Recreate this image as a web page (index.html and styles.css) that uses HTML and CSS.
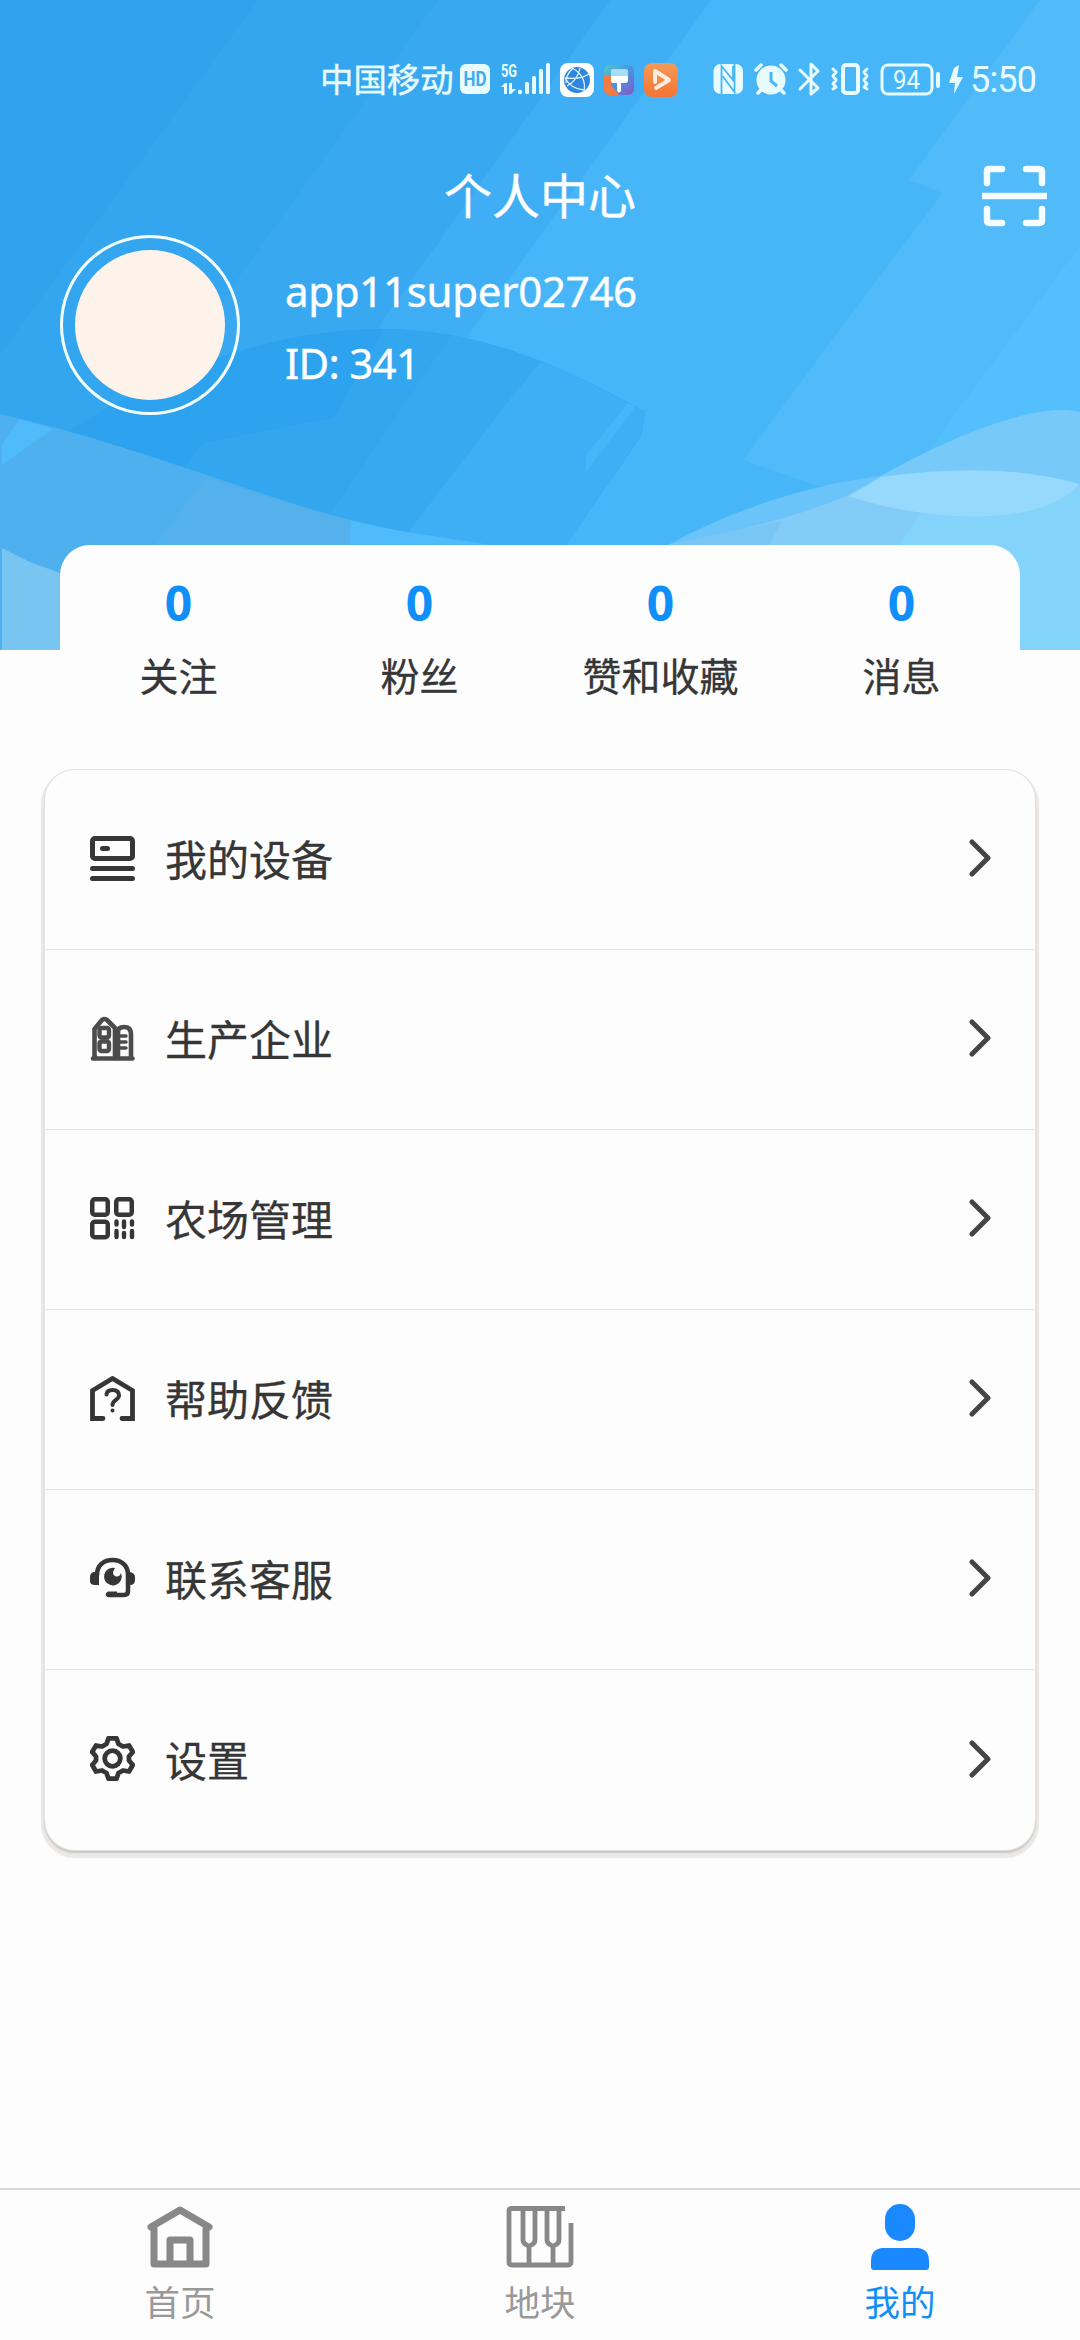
FILE: index.html
```html
<!DOCTYPE html>
<html lang="zh-CN">
<head>
<meta charset="utf-8">
<title>个人中心</title>
<link rel="stylesheet" href="styles.css">
</head>
<body>
<header class="hero">
  <svg class="hero-art" viewBox="0 0 1080 650" aria-hidden="true">
    <defs>
      <linearGradient id="brush" x1="0" y1="0" x2="1" y2="1"><stop offset="0" stop-color="#53c9c4"/><stop offset=".5" stop-color="#4a94df"/><stop offset="1" stop-color="#8a55c5"/></linearGradient>
      <linearGradient id="play" x1="0" y1="0" x2="0" y2="1"><stop offset="0" stop-color="#f49a5a"/><stop offset="1" stop-color="#f57433"/></linearGradient>
      <clipPath id="hill"><path d="M0 480C100 400 240 329 380 329C480 329 560 365 645 412L641 436L555 560H0Z"/></clipPath>
    </defs>
    <path fill="#2fa3ee" d="M0 0H1080V650H0Z"/>
    <path fill="#33a6ef" d="M258 0L0 355V650H1080V0Z"/>
    <path fill="#38a9f0" d="M438 0L0 610V650H1080V0Z"/>
    <path fill="#3faef4" d="M610 0L150 650H1080V0Z"/>
    <path fill="#47b6f8" d="M711 0L240 650H1080V0Z"/>
    <path fill="#51bbf9" d="M1040 0L909 180L943 193L862 300L743 460L848 496L1080 600V0Z"/>
    <path fill="#54bffd" d="M1080 246L925 455L1080 500Z"/>
    <g clip-path="url(#hill)">
      <path fill="#2da2ee" d="M0 300H660V570H0Z"/>
      <path fill="#32a6ef" d="M400 300L334 418L295 425L203 443L110 570H660V300Z"/>
      <path fill="#37a9f0" d="M475 300L340 500L290 570H660V300Z"/>
      <path fill="#3eaff5" d="M590 300L500 412L410 530V570H660V300Z"/>
      <path fill="#47b6f8" d="M629 402L586 455V472L636 406Z"/>
    </g>
    <path fill="#4eb0ee" d="M0 414C130 443 250 494 350 520C400 533 450 538 490 545V650H0Z"/>
    <path fill="#50bbfa" d="M2 444L20 419L53 429L2 465ZM350 520C400 533 450 538 490 545H350Z"/>
    <path fill="#54b1eb" d="M206 477C255 493 300 508 350 520V545H155Z"/>
    <path fill="#78c5f2" d="M2 548L30 562L60 573L80 580V650H2Z"/>
    <path fill="#6ac4fa" d="M668 545C760 495 860 470 970 470C1010 470 1050 475 1080 484V650H668Z"/>
    <path fill="#76c9f9" d="M668 545C740 532 830 510 870 482C930 447 1030 400 1080 412V650H668Z"/>
    <path fill="#84ccf8" d="M668 545C740 532 800 515 848 496L920 560V650H668Z"/>
    <path fill="#79c5f3" d="M680 542L782 521L767 550H668Z"/>
    <path fill="#83d3fb" d="M920 512L896 550V650H1080V484Z"/>
    <path fill="#84ccf8" d="M848 496L920 514L896 550H800Z"/>
    <path fill="#97d9fd" d="M848 496C858 490 870 484 881 477C950 467 1022 467 1079 484C1053 520 950 529 848 496Z"/>
  </svg>

  <div class="status">
    <span class="carrier">中国移动</span>
    <svg class="status-left" viewBox="460 58 220 40">
      <rect x="460" y="63" width="30" height="30" rx="6" fill="#e8fbff"/>
      <text class="hd" x="475" y="85" text-anchor="middle" textLength="23" lengthAdjust="spacingAndGlyphs">HD</text>
      <text class="net" x="501" y="76" textLength="16" lengthAdjust="spacingAndGlyphs">5G</text>
      <g fill="#e8fbff"><path d="M501 86L505 82H507V93H504V86ZM509 82H512V88H516L511 93H509Z"/><circle cx="520" cy="91" r="2.2"/><rect x="525" y="81" width="4" height="12" rx="1.5"/><rect x="532" y="75" width="4" height="18" rx="1.5"/><rect x="539" y="68" width="4" height="25" rx="1.5"/><rect x="546" y="62" width="4" height="31" rx="1.5"/></g>
      <rect x="560" y="62" width="34" height="34" rx="8" fill="#fff"/><circle cx="577" cy="79" r="13" fill="#2f86dc"/>
      <path d="M565 77Q582 79 590 72M565 77Q571 88 584 89M572 67Q587 75 584 91M573 67Q565 75 566 82M567 85Q578 79 580 67" fill="none" stroke="#d9f3ff" stroke-width="1.3"/>
      <rect x="604" y="64" width="30" height="30" rx="6" fill="url(#brush)"/><path d="M604 74H611V84L619 94H610Q604 94 604 88Z" fill="#f47c42"/><path d="M611 69Q611 68 613 68H626Q628 68 628 70V76H611Z" fill="#a4ddf7"/><path d="M611 75H628V79Q628 82 625 82H621V90Q619 93 617 90V82H613Q611 82 611 79Z" fill="#fff"/>
      <rect x="644" y="62" width="34" height="34" rx="8" fill="url(#play)"/><path d="M655 81V70L669 79L656 87" fill="none" stroke="#ffeee0" stroke-width="4" stroke-linejoin="round" stroke-linecap="round"/>
    </svg>
    <svg class="status-right" viewBox="710 58 256 40">
      <g fill="#e8fbff">
        <rect x="713.5" y="63" width="29.5" height="30" rx="7"/>
        <path d="M721.500 93V65L733 79V65M722.500 75L734.500 91V63" fill="none" stroke="#48b6f8" stroke-width="1.800"/>
        <circle cx="771" cy="79" r="14.5"/><path d="M756 69L761 64M786 69L781 64M761 89L758 92M781 89L784 92" stroke="#e8fbff" stroke-width="3.5" stroke-linecap="round"/>
        <path d="M771 71V80L777 85" fill="none" stroke="#48b6f8" stroke-width="3"/>
        <path d="M954 67L949 82H955L954 93L963 76H957L959 64Z"/>
        <rect x="936" y="71" width="4" height="16" rx="2"/>
      </g>
      <g fill="none" stroke="#e8fbff" stroke-width="3" stroke-linecap="round" stroke-linejoin="round">
        <path d="M800 69L818 87L811 93V63L818 70L800 88"/>
        <rect x="843" y="64" width="15" height="28" rx="3" stroke-width="4"/>
        <path d="M833 68L836 71L833 75L836 79L833 83L836 86L833 88M867 68L864 71L867 75L864 79L867 83L864 86L867 88"/>
        <rect x="882" y="64" width="50" height="29" rx="6"/>
      </g>
      <text class="battery" x="906.500" y="87.500" text-anchor="middle" textLength="27" lengthAdjust="spacingAndGlyphs">94</text>
    </svg>
    <span class="clock">5:50</span>
  </div>

  <div class="titlebar">
    <h1>个人中心</h1>
    <svg class="scan" viewBox="0 0 66 64" fill="none" stroke="#f4fdff" stroke-width="6.500" stroke-linecap="round"><path d="M5 19V7Q5 5 7 5H20M44 5H57Q60 5 60 8V19M5 45V56Q5 59 8 59H20M44 59H57Q60 59 60 56V45"/><path d="M0 32H65" stroke-linecap="butt"/></svg>
  </div>

  <div class="profile">
    <div class="avatar"><div class="avatar-fill"></div></div>
    <div class="who"><div class="name">app11super02746</div><div class="uid">ID: 341</div></div>
  </div>
</header>

<section class="stats">
  <div class="stat"><b>0</b><span>关注</span></div>
  <div class="stat"><b>0</b><span>粉丝</span></div>
  <div class="stat"><b>0</b><span>赞和收藏</span></div>
  <div class="stat"><b>0</b><span>消息</span></div>
</section>

<main class="menu">
  <div class="row">
    <svg class="icon" viewBox="0 0 45 45" fill="none" stroke="#363636" stroke-linecap="round"><rect x="2.500" y="2.500" width="40" height="20" rx="2.500" stroke-width="5"/><path d="M12.500 12.500H17.500M2.500 32.500H42.500M2.500 42.500H42.500" stroke-width="5"/></svg>
    <span>我的设备</span><svg class="chev" viewBox="0 0 24 40"><path d="M3 4L19 20L3 36"/></svg>
  </div>
  <div class="row">
    <svg class="icon" viewBox="0 0 45 45" fill="none" stroke="#4c4c4c" stroke-linecap="round" stroke-linejoin="round"><path d="M3 42.500H42.500M4.500 42V13L12 4Q14 2 17 4L25 12V42M28 42V16Q28 11 34 11Q41 11 41 18V42" stroke-width="4.600"/><path d="M28.500 20H36M28.500 26H36M28.500 32H36" stroke-width="3.400"/><rect x="9.500" y="12" width="9.500" height="9.500" rx="2" stroke-width="4.400"/><rect x="9.500" y="25.500" width="9.500" height="9.500" rx="2" stroke-width="4.400"/></svg>
    <span>生产企业</span><svg class="chev" viewBox="0 0 24 40"><path d="M3 4L19 20L3 36"/></svg>
  </div>
  <div class="row">
    <svg class="icon" viewBox="0 0 45 45" fill="none" stroke="#363636" stroke-width="4.500"><rect x="2.250" y="3.250" width="15.500" height="15.500" rx="2.500"/><rect x="26.250" y="3.250" width="15.500" height="15.500" rx="2.500"/><rect x="2.250" y="25.750" width="15.500" height="15.500" rx="2.500"/><path d="M26.500 25.500V28.500M34 25.500V31M42 25.500V28.500M26.500 35V41M34 37V41M42 35V41" stroke-width="4.400" stroke-linecap="round"/></svg>
    <span>农场管理</span><svg class="chev" viewBox="0 0 24 40"><path d="M3 4L19 20L3 36"/></svg>
  </div>
  <div class="row">
    <svg class="icon" viewBox="0 0 45 45" fill="none" stroke="#363636" stroke-linecap="round"><path d="M13 42.500H2.500V14.500L22.500 2.500L42.500 14.500V42.500H32" stroke-width="4.800"/><path d="M16.500 18.500Q17 14 22.500 14Q29 14 29 19.500C29 24 22.500 24 22.500 29M22.500 34.500V34.600" stroke-width="4"/></svg>
    <span>帮助反馈</span><svg class="chev" viewBox="0 0 24 40"><path d="M3 4L19 20L3 36"/></svg>
  </div>
  <div class="row">
    <svg class="icon" viewBox="0 0 45 45"><path d="M7 19C7 9 14 4 22.500 4S38 9 38 19V35Q38 39 34 39H18.500" fill="none" stroke="#363636" stroke-width="4.500" stroke-linecap="round"/><path d="M5 16H9V29H5Q0 29 0 25V21Q0 16 5 16ZM40 16Q45 17 45 21V24Q45 29 40 29H37V16Z" fill="#363636"/><path d="M18 35.500H27V41H18Q13 38.500 18 35.500ZM25 12Q21 18 25 20Q29 22 31 17A8.800 8.800 0 1 1 25 12Z" fill="#363636"/></svg>
    <span>联系客服</span><svg class="chev" viewBox="0 0 24 40"><path d="M3 4L19 20L3 36"/></svg>
  </div>
  <div class="row">
    <svg class="icon" viewBox="0 0 45 45" fill="none" stroke="#363636" stroke-width="4.800" stroke-linejoin="round"><path d="M18.500 2.300H26.500L28.500 8L33 10.500L39 9.500L42.800 16L39 20.500V24.500L42.800 29L39 35.500L33 34.500L28.500 37L26.500 42.700H18.500L16.500 37L12 34.500L6 35.500L2.200 29L6 24.500V20.500L2.200 16L6 9.500L12 10.500L16.500 8Z"/><circle cx="22.500" cy="22.500" r="7.800"/></svg>
    <span>设置</span><svg class="chev" viewBox="0 0 24 40"><path d="M3 4L19 20L3 36"/></svg>
  </div>
</main>

<nav class="tabs">
  <div class="tab">
    <svg viewBox="0 0 70 70" fill="none" stroke="#888" stroke-width="7" stroke-linejoin="round" stroke-linecap="round"><path d="M9 27V62H61V27M6 25L35 8L64 25"/><path d="M25 60V38H45V60"/></svg>
    <span>首页</span>
  </div>
  <div class="tab">
    <svg viewBox="0 0 70 70" fill="none" stroke="#888" stroke-width="4.800"><path d="M60 6.500H7Q4 6.500 4 9V60Q4 63 7 63H63Q66 63 66 60V21"/><path d="M18 7V38Q18 42 24 44V62M30 7V38Q30 42 24 44M42 7V38Q42 42 48 44V62M54 7V38Q54 42 48 44"/></svg>
    <span>地块</span>
  </div>
  <div class="tab active">
    <svg viewBox="0 0 70 70" fill="#1a88ff"><rect x="20" y="2" width="30" height="37" rx="15"/><path d="M6 59C6 48 13 46 19 46H51C57 46 64 48 64 59V65Q64 68 61 68H9Q6 68 6 65Z"/></svg>
    <span>我的</span>
  </div>
</nav>
</body>
</html>
```
FILE: styles.css
```css
* { box-sizing: border-box; }
body {
  margin: 0;
  width: 1080px;
  height: 2340px;
  display: flex;
  flex-direction: column;
  overflow: hidden;
  background: #fdfdfd;
  color: #363636;
  font-family: "Noto Sans", "Noto Sans CJK SC", sans-serif;
}
svg { display: block; flex: none; }
.hero { position: relative; height: 650px; flex: none; color: #fff; }
.hero-art { position: absolute; inset: 0; width: 1080px; height: 650px; z-index: -1; }

.status {
  display: flex;
  align-items: center;
  height: 157px;
  padding-left: 320px;
  color: #e8fbff;
}
.carrier { width: 140px; font-size: 33.4px; line-height: 40px; white-space: nowrap; -webkit-text-stroke: .4px; }
.status-left { width: 220px; height: 40px; }
.status-right { width: 256px; height: 40px; margin-left: 30px; }
.clock { margin-left: 4px; padding-top: 2px; font-family: Roboto, sans-serif; font-size: 36px; line-height: 40px; letter-spacing: -.8px; }
.hd { font: 700 21px Roboto, sans-serif; fill: #3cabf1; }
.net { font: 700 18px Roboto, sans-serif; fill: #e8fbff; }
.battery { font: 400 26px Roboto, sans-serif; fill: #e8fbff; }

.titlebar {
  display: grid;
  grid-template-columns: 1fr auto 1fr;
  align-items: center;
  height: 78px;
  padding-right: 32px;
  padding-left: 32px;
}
h1 { grid-column: 2; margin: 0; font-size: 48px; font-weight: 400; line-height: 60px; -webkit-text-stroke: .4px; }
.scan { justify-self: end; width: 66px; height: 64px; }

.profile { display: flex; gap: 45px; padding-left: 60px; }
.avatar { width: 180px; height: 180px; padding: 12px; border: 3px solid #f3ffff; border-radius: 50%; }
.avatar-fill { width: 150px; height: 150px; border-radius: 50%; background: #fdf3eb; }
.who { padding-top: 20px; font-size: 42px; line-height: 72px; -webkit-text-stroke: .4px; }
.name { letter-spacing: -.3px; }
.uid { letter-spacing: -.7px; }

.stats {
  position: relative;
  display: grid;
  grid-template-columns: repeat(4, 241px);
  justify-content: center;
  flex: none;
  width: 960px;
  height: 195px;
  margin: -105px 60px 0;
  padding: 28px 0 0;
  border-radius: 30px 30px 0 0;
  background: #fdfdfd;
}
.stat { display: flex; flex-direction: column; align-items: center; }
.stat b { color: #108ff8; font-size: 48px; line-height: 60px; }
.stat span { margin-top: 15px; font-size: 39px; line-height: 56px; -webkit-text-stroke: .3px; }

.menu {
  flex: none;
  width: 990px;
  margin: 30px 45px 0;
  border-radius: 30px;
  background: #fdfdfd;
  box-shadow: 0 0 0 1px #e4e2e0, 0 2px 1px 1px #c9c9c9, 0 4px 1px 4px #eae7e4;
}
.row {
  display: flex;
  align-items: center;
  height: 180px;
  padding: 0 42px 3px 45px;
  border-bottom: 1px solid #e6e4e2;
}
.row:last-child { border-bottom: 0; }
.icon { width: 45px; height: 45px; }
.row span { flex: 1; margin-left: 30px; padding-top: 4px; font-size: 42px; line-height: 60px; -webkit-text-stroke: .3px; }
.chev { width: 24px; height: 40px; fill: none; stroke: #454545; stroke-width: 5; stroke-linecap: round; stroke-linejoin: round; }

.tabs {
  display: grid;
  grid-template-columns: repeat(3, 1fr);
  height: 152px;
  margin-top: auto;
  flex: none;
  border-top: 2px solid #d8d8d8;
  color: #999;
}
.tab { display: flex; flex-direction: column; align-items: center; padding-top: 12px; }
.tab svg { width: 70px; height: 70px; }
.tab span { margin-top: 5px; font-size: 35.5px; line-height: 50px; }
.active { color: #108ff8; }
```
